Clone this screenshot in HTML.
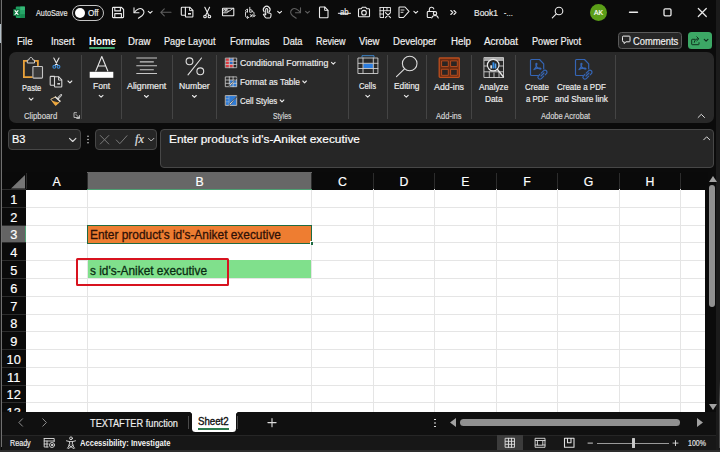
<!DOCTYPE html>
<html><head><meta charset="utf-8">
<style>
*{margin:0;padding:0;box-sizing:border-box}
html,body{width:720px;height:452px;overflow:hidden;background:#0b0b0b}
body{position:relative;font-family:"Liberation Sans",sans-serif;color:#fff;font-size:10px}
.a{position:absolute}
.t{position:absolute;white-space:pre;line-height:1;transform-origin:0 50%;-webkit-text-stroke:0.18px currentColor}
.sep{position:absolute;width:1px;background:#444;top:55px;height:64px}
svg{position:absolute;overflow:visible}
</style></head><body>

<!-- window edges -->
<div class="a" style="left:0;top:0;width:1px;height:452px;background:#1a1a1a"></div>
<div class="a" style="left:1px;top:0;width:1px;height:447px;background:#707070"></div>
<div class="a" style="left:0;top:24px;width:1.400px;height:19px;background:#b4c0c8"></div>
<div class="a" style="left:716px;top:0;width:4px;height:452px;background:#1b1b1b"></div>
<div class="a" style="left:718.500px;top:380px;width:1px;height:68px;background:linear-gradient(#1b1b1b,#4c4c4c 30%)"></div>
<div class="a" style="left:0;top:450px;width:720px;height:2px;background:#2d2d2d"></div>

<!-- title bar controls -->
<div class="a" style="left:72px;top:5px;width:32px;height:15.5px;border:1px solid #c4c4c4;border-radius:8px"></div>
<div class="a" style="left:75px;top:7.6px;width:10.4px;height:10.4px;border-radius:50%;background:#fff"></div>
<div class="a" style="left:589.5px;top:4px;width:17px;height:17px;border-radius:50%;background:#5b9e18"></div>

<!-- menu underline + buttons -->
<div class="a" style="left:89px;top:47.2px;width:26px;height:2px;background:#46a871;border-radius:1px"></div>
<div class="a" style="left:618px;top:32px;width:64px;height:17px;border:1px solid #5a5a5a;border-radius:3.5px;background:#262626"></div>
<div class="a" style="left:688px;top:32px;width:23.5px;height:17px;border-radius:3.5px;background:#3ca865"></div>

<!-- ribbon -->
<div class="a" style="left:9px;top:52px;width:705px;height:71px;background:#292929;border-radius:7px"></div>
<div class="sep" style="left:81.3px"></div>
<div class="sep" style="left:120.8px"></div>
<div class="sep" style="left:172.3px"></div>
<div class="sep" style="left:216.3px"></div>
<div class="sep" style="left:348px"></div>
<div class="sep" style="left:387.3px"></div>
<div class="sep" style="left:426.2px"></div>
<div class="sep" style="left:471px"></div>
<div class="sep" style="left:515px"></div>
<div class="sep" style="left:615px"></div>

<!-- formula bar -->
<div class="a" style="left:8px;top:129.3px;width:72.8px;height:20.4px;background:#262626;border:1px solid #474747;border-radius:4px"></div>
<div class="a" style="left:95px;top:129.3px;width:62px;height:20.4px;background:#262626;border:1px solid #474747;border-radius:4px"></div>
<div class="a" style="left:159.7px;top:129.3px;width:554.5px;height:38.4px;background:#262626;border:1px solid #474747;border-radius:4px"></div>

<!-- grid -->
<div class="a" style="left:2px;top:171.7px;width:706px;height:240.3px;background:#0a0a0a"></div>
<div class="a" style="left:26px;top:189.6px;width:679px;height:222px;background:#fff"></div>
<div class="a" style="left:86.9px;top:189px;width:1px;height:222.5px;background:#e5e5e5"></div>
<div class="a" style="left:311.2px;top:189px;width:1px;height:222.5px;background:#e5e5e5"></div>
<div class="a" style="left:372.7px;top:189px;width:1px;height:222.5px;background:#e5e5e5"></div>
<div class="a" style="left:434.2px;top:189px;width:1px;height:222.5px;background:#e5e5e5"></div>
<div class="a" style="left:495.7px;top:189px;width:1px;height:222.5px;background:#e5e5e5"></div>
<div class="a" style="left:557.2px;top:189px;width:1px;height:222.5px;background:#e5e5e5"></div>
<div class="a" style="left:618.7px;top:189px;width:1px;height:222.5px;background:#e5e5e5"></div>
<div class="a" style="left:680.2px;top:189px;width:1px;height:222.5px;background:#e5e5e5"></div>
<div class="a" style="left:26px;top:206.88px;width:679px;height:1px;background:#e5e5e5"></div>
<div class="a" style="left:26px;top:224.66px;width:679px;height:1px;background:#e5e5e5"></div>
<div class="a" style="left:26px;top:242.44px;width:679px;height:1px;background:#e5e5e5"></div>
<div class="a" style="left:26px;top:260.22px;width:679px;height:1px;background:#e5e5e5"></div>
<div class="a" style="left:26px;top:278.0px;width:679px;height:1px;background:#e5e5e5"></div>
<div class="a" style="left:26px;top:295.78px;width:679px;height:1px;background:#e5e5e5"></div>
<div class="a" style="left:26px;top:313.56px;width:679px;height:1px;background:#e5e5e5"></div>
<div class="a" style="left:26px;top:331.34000000000003px;width:679px;height:1px;background:#e5e5e5"></div>
<div class="a" style="left:26px;top:349.12px;width:679px;height:1px;background:#e5e5e5"></div>
<div class="a" style="left:26px;top:366.9px;width:679px;height:1px;background:#e5e5e5"></div>
<div class="a" style="left:26px;top:384.68px;width:679px;height:1px;background:#e5e5e5"></div>
<div class="a" style="left:26px;top:402.46000000000004px;width:679px;height:1px;background:#e5e5e5"></div>
<!-- selected header highlights -->
<div class="a" style="left:87.2px;top:171.8px;width:224.5px;height:17.8px;background:#676767;border-bottom:1.5px solid #4d9f72"></div>
<div class="a" style="left:2px;top:225.2px;width:24px;height:17.8px;background:#646464;border-right:1px solid #4d9f72"></div>
<div class="a" style="left:25.5px;top:173px;width:1px;height:16px;background:#2c2c2c"></div>
<div class="a" style="left:86.9px;top:173px;width:1px;height:16px;background:#2c2c2c"></div>
<div class="a" style="left:311.2px;top:173px;width:1px;height:16px;background:#2c2c2c"></div>
<div class="a" style="left:372.7px;top:173px;width:1px;height:16px;background:#2c2c2c"></div>
<div class="a" style="left:434.2px;top:173px;width:1px;height:16px;background:#2c2c2c"></div>
<div class="a" style="left:495.7px;top:173px;width:1px;height:16px;background:#2c2c2c"></div>
<div class="a" style="left:557.2px;top:173px;width:1px;height:16px;background:#2c2c2c"></div>
<div class="a" style="left:618.7px;top:173px;width:1px;height:16px;background:#2c2c2c"></div>
<div class="a" style="left:680.2px;top:173px;width:1px;height:16px;background:#2c2c2c"></div>
<div class="a" style="left:2px;top:189.1px;width:24px;height:1px;background:#2c2c2c"></div>
<div class="a" style="left:2px;top:206.88px;width:24px;height:1px;background:#2c2c2c"></div>
<div class="a" style="left:2px;top:224.66px;width:24px;height:1px;background:#2c2c2c"></div>
<div class="a" style="left:2px;top:242.44px;width:24px;height:1px;background:#2c2c2c"></div>
<div class="a" style="left:2px;top:260.22px;width:24px;height:1px;background:#2c2c2c"></div>
<div class="a" style="left:2px;top:278.0px;width:24px;height:1px;background:#2c2c2c"></div>
<div class="a" style="left:2px;top:295.78px;width:24px;height:1px;background:#2c2c2c"></div>
<div class="a" style="left:2px;top:313.56px;width:24px;height:1px;background:#2c2c2c"></div>
<div class="a" style="left:2px;top:331.34000000000003px;width:24px;height:1px;background:#2c2c2c"></div>
<div class="a" style="left:2px;top:349.12px;width:24px;height:1px;background:#2c2c2c"></div>
<div class="a" style="left:2px;top:366.9px;width:24px;height:1px;background:#2c2c2c"></div>
<div class="a" style="left:2px;top:384.68px;width:24px;height:1px;background:#2c2c2c"></div>
<div class="a" style="left:2px;top:402.46000000000004px;width:24px;height:1px;background:#2c2c2c"></div>
<div class="t" style="left:52.60px;top:175.60px;font-size:12.3px;color:#ffffff">A</div>
<div class="t" style="left:195.45px;top:175.60px;font-size:12.3px;color:#ffffff">B</div>
<div class="t" style="left:338.00px;top:175.60px;font-size:12.3px;color:#ffffff">C</div>
<div class="t" style="left:399.50px;top:175.60px;font-size:12.3px;color:#ffffff">D</div>
<div class="t" style="left:461.35px;top:175.60px;font-size:12.3px;color:#ffffff">E</div>
<div class="t" style="left:523.19px;top:175.60px;font-size:12.3px;color:#ffffff">F</div>
<div class="t" style="left:583.66px;top:175.60px;font-size:12.3px;color:#ffffff">G</div>
<div class="t" style="left:645.50px;top:175.60px;font-size:12.3px;color:#ffffff">H</div>
<div class="t" style="left:10.14px;top:193.84px;font-size:12.8px;color:#ffffff">1</div>
<div class="t" style="left:10.14px;top:211.62px;font-size:12.8px;color:#ffffff">2</div>
<div class="t" style="left:10.14px;top:229.40px;font-size:12.8px;color:#ffffff">3</div>
<div class="t" style="left:10.14px;top:247.18px;font-size:12.8px;color:#ffffff">4</div>
<div class="t" style="left:10.14px;top:264.96px;font-size:12.8px;color:#ffffff">5</div>
<div class="t" style="left:10.14px;top:282.74px;font-size:12.8px;color:#ffffff">6</div>
<div class="t" style="left:10.14px;top:300.52px;font-size:12.8px;color:#ffffff">7</div>
<div class="t" style="left:10.14px;top:318.30px;font-size:12.8px;color:#ffffff">8</div>
<div class="t" style="left:10.14px;top:336.08px;font-size:12.8px;color:#ffffff">9</div>
<div class="t" style="left:6.58px;top:353.86px;font-size:12.8px;color:#ffffff">10</div>
<div class="t" style="left:7.05px;top:371.64px;font-size:12.8px;color:#ffffff">11</div>
<div class="t" style="left:6.58px;top:389.42px;font-size:12.8px;color:#ffffff">12</div>
<div class="t" style="left:6.58px;top:407.20px;font-size:12.8px;color:#ffffff">13</div>
<!-- select all triangle -->
<svg style="left:11px;top:174.5px" width="14" height="13.5" viewBox="0 0 14 13.5"><path d="M14 0V13.5H0Z" fill="#767676"/></svg>

<!-- cells -->
<div class="a" style="left:87.2px;top:225.3px;width:224.8px;height:18.4px;background:#ee7d31;border:1px solid #1f6b42"></div>
<div class="a" style="left:309.5px;top:241.2px;width:3.6px;height:3.6px;background:#1f6b42;border-top:0.8px solid #fff;border-left:0.8px solid #fff"></div>
<div class="a" style="left:87.7px;top:260.2px;width:223.7px;height:18.2px;background:#80e08c"></div>
<div class="a" style="left:76.2px;top:258px;width:153.3px;height:27.8px;border:2px solid #d8131f;border-radius:1.5px"></div>

<!-- sheet tabs -->
<div class="a" style="left:2px;top:411.5px;width:714px;height:23px;background:#101010"></div>
<div class="a" style="left:191.700px;top:411.500px;width:44.100px;height:20.600px;background:#fff;border-radius:0 0 3.500px 3.500px"></div>
<div class="a" style="left:188.700px;top:411.500px;width:3px;height:3px;background:radial-gradient(circle at 0 100%,#101010 2.800px,#fff 3.200px)"></div>
<div class="a" style="left:235.800px;top:411.500px;width:3px;height:3px;background:radial-gradient(circle at 100% 100%,#101010 2.800px,#fff 3.200px)"></div>
<div class="a" style="left:197.500px;top:428px;width:31.700px;height:1.700px;background:#2a7a4c"></div>
<div class="a" style="left:188.200px;top:416px;width:1px;height:13px;background:#4a4a4a"></div>
<div class="a" style="left:237.200px;top:416px;width:1px;height:13px;background:#4a4a4a"></div>

<!-- scrollbars -->
<div class="a" style="left:709.3px;top:185px;width:6px;height:122px;border-radius:3px;background:#909090"></div>
<svg style="left:708.5px;top:176px" width="8" height="6" viewBox="0 0 8 6"><path d="M4 0L8 6H0Z" fill="#a2a2a2"/></svg>
<svg style="left:708.5px;top:403.5px" width="8" height="6" viewBox="0 0 8 6"><path d="M0 0H8L4 6Z" fill="#a2a2a2"/></svg>
<div class="a" style="left:459.5px;top:418.7px;width:220px;height:7.3px;border-radius:3.7px;background:#909090"></div>
<svg style="left:450px;top:418px" width="6" height="9" viewBox="0 0 6 9"><path d="M6 0V9L0 4.5Z" fill="#a2a2a2"/></svg>
<svg style="left:697px;top:418px" width="6" height="9" viewBox="0 0 6 9"><path d="M0 0V9L6 4.5Z" fill="#a2a2a2"/></svg>
<div class="a" style="left:434.3px;top:418.5px;width:1.6px;height:1.6px;background:#ddd;box-shadow:0 3.5px 0 #ddd,0 7px 0 #ddd"></div>

<!-- status bar -->
<div class="a" style="left:2px;top:434.5px;width:714px;height:15.5px;background:#171717;border-top:1px solid #262626"></div>
<div class="a" style="left:497px;top:434.5px;width:26px;height:15.5px;background:#3b3b3b"></div>
<div class="a" style="left:597px;top:442.6px;width:72px;height:1px;background:#9a9a9a"></div>
<div class="a" style="left:631.7px;top:438px;width:3px;height:9.5px;background:#c8c8c8;border-radius:0.5px"></div>

<svg style="left:0;top:0" width="720" height="452" viewBox="0 0 720 452" fill="none" stroke-linecap="round" stroke-linejoin="round">
<!-- ===== TITLE BAR ===== -->
<!-- excel logo -->
<g stroke="none">
<rect x="15.800" y="6.600" width="9.100" height="11.400" rx="0.900" fill="#1f9d60"/>
<rect x="20.300" y="6.600" width="4.600" height="3.900" fill="#35b877"/>
<rect x="20.300" y="10.500" width="4.600" height="3.700" fill="#27a568"/>
<rect x="20.300" y="14.200" width="4.600" height="3.800" fill="#178a50"/>
<rect x="13.200" y="9.100" width="6.600" height="7" rx="0.700" fill="#117a43"/>
<path d="M15 10.700L18 14.500M18 10.700L15 14.500" stroke="#fff" stroke-width="1.100"/>
</g>
<g stroke="#ececec" stroke-width="1.1">
<!-- save -->
<path d="M112.5 8.2a.8.8 0 0 1 .8-.8h8.2l2.1 2.1v7.3a.8.8 0 0 1-.8.8h-9.5a.8.8 0 0 1-.8-.8z"/>
<path d="M114.8 7.6v3.3h5.6V7.6M114.8 17.4v-3.8h6.6v3.8"/>
<!-- undo -->
<path d="M134 7.8v5h5"/>
<path d="M134.3 12.5c2.2-3.6 6-5 8.300-3 2.300 2 1.400 4.600-.6 6.200l-3.600 2.500"/>
<path d="M148.300 11.300l1.900 1.900 1.900-1.900"/>
<!-- copy/paste -->
<path d="M185.500 15.300h-3.500a.7.7 0 0 1-.7-.7v-6.600a.7.7 0 0 1 .7-.7h3.300"/>
<path d="M185.400 7.200h4.300l3.200 3.200v5.900a.7.7 0 0 1-.7.700h-6.100a.7.700 0 0 1-.7-.7z"/>
<path d="M189.500 7.400v3.200h3.200" stroke-width="0.9"/>
<rect x="188" y="13" width="3" height="1.600" fill="#ececec" stroke="none"/>
<!-- scissors -->
<path d="M204.800 7.200l4 8.200M209.600 7.200l-4 8.200"/>
<circle cx="205" cy="16.500" r="1.300"/><circle cx="209.400" cy="16.500" r="1.300"/>
<!-- mail/pen -->
<rect x="222.500" y="8.300" width="11.300" height="7.400" rx="0.500"/>
<path d="M227.500 12.300l5.500-3.800M222.800 12.800h4" stroke-width="0.900"/>
<path d="M224.300 9.300a1 1 0 1 0 0 2 1 1 0 1 0 0-2M225.500 9.200v2.200M226.600 8.600v2.800a1 1 0 1 0 0-1.800" stroke-width="0.700"/>
<!-- replace (ab + arrows) -->
<path d="M247.300 9.500a1.300 1.300 0 1 0 0 2.400M247.500 9.200v2.900M249.800 7.300v4.800M249.800 10a1.400 1.400 0 1 1 0 2" stroke-width="0.900"/>
<path d="M245.500 12.500v3.300c0 1 .6 1.600 1.600 1.600h1.200M247.300 16.200l1.200 1.200-1.200 1.200M254 16.500v-3.300c0-1-.6-1.600-1.600-1.600M255.300 15.300l-1.300 1.300-1.300-1.300M250.300 14.500l2 2.500M252.300 14.500l-2 2.500" stroke-width="0.900"/>
<!-- touch -->
<path d="M264.200 11.800a3.300 3.300 0 1 1 5 0"/>
<path d="M265.700 14.500v-5a1 1 0 0 1 2 0v3.200l2.300.5c.8.200 1.200.7 1.100 1.500l-.4 2.300c-.1.600-.5 1-1.200 1h-3c-.6 0-1-.3-1.300-.8l-1.800-2.800c.6-.6 1.500-.5 2.300.4z"/>
<path d="M277.700 11.300l1.900 1.900 1.900-1.900"/>
<!-- new doc -->
<path d="M319.500 7.700a.7.7 0 0 1 .7-.7h4.500l3.300 3.300v6.700a.7.700 0 0 1-.7.700h-7.100a.7.700 0 0 1-.7-.7z"/>
<path d="M324.600 7.200v3.200h3.200" stroke-width="0.9"/>
<!-- strikethrough ab -->
<path d="M338.300 13.300h12.200" stroke-width="1"/>
<!-- camera -->
<path d="M358.500 9.500a.8.800 0 0 1 .8-.8h2l1-1.500h3.400l1 1.500h2a.8.800 0 0 1 .8.800v6.500a.8.800 0 0 1-.8.800h-9.400a.8.800 0 0 1-.8-.8z"/>
<circle cx="364" cy="12.700" r="2.300"/>
<!-- table x -->
<path d="M380 7.500h10.500v4M380 7.500v10h3.500M380 10.700h10.500M383.500 7.500v10M387 7.500v3.200M380 14h3.500" stroke-width="0.9"/>
<path d="M385.500 12.700l5 5M390.500 12.700l-5 5"/>
<!-- doc pen -->
<path d="M403 17.500h-3.300a.7.700 0 0 1-.7-.7v-9.100a.7.700 0 0 1 .7-.7h5.300l4 4.300-5.500 6.200z"/>
<path d="M401 10h3M401 12.300h2" stroke-width="0.9"/>
<path d="M413.900 11.300l1.900 1.900 1.900-1.900"/>
<!-- lock person -->
<path d="M431 17.500h-3a.7.700 0 0 1-.7-.7v-4.600a.7.700 0 0 1 .7-.7h6.500"/>
<path d="M429.300 11.300v-1.800a2.300 2.300 0 0 1 4.500-.6"/>
<circle cx="435" cy="13.300" r="1.700"/>
<path d="M431.800 18c.3-1.700 1.500-2.500 3.200-2.500s2.900.8 3.200 2.500"/>
<!-- >> -->
<path d="M450.800 10.500l2 2-2 2M454 10.500l2 2-2 2"/>
<!-- search -->
<circle cx="559" cy="11" r="3.800"/><path d="M556.300 13.800l-4 4"/>
<!-- window controls -->
<path d="M629.500 12.300h8" stroke-width="1.400"/>
<rect x="664" y="8.800" width="7" height="7" rx="1.200" stroke-width="1.300"/>
<path d="M698.300 8.500l8 8M706.300 8.500l-8 8" stroke-width="1.200"/>
</g>
<!-- dim icons -->
<g stroke="#5f5f5f" stroke-width="1.100">
<path d="M171 12.300h-10.200M164.300 8.800l-3.500 3.500 3.500 3.500"/>
<path d="M300.500 7.800v5h-5"/>
<path d="M300.300 12.500c-2.200-3.600-6-5-8.300-3-2.300 2-1.400 4.600.6 6.200l3.600 2.500"/>
<path d="M305.600 11.300l1.900 1.900 1.900-1.900"/>
</g>

<!-- ===== MENU BUTTON ICONS ===== -->
<g stroke="#f0f0f0" stroke-width="1">
<path d="M622.500 36.800a.7.700 0 0 1 .7-.700h6.100a.7.700 0 0 1 .7.700v4.300a.7.700 0 0 1-.7.700h-3.300l-1.900 1.700v-1.700h-.9a.7.700 0 0 1-.7-.7z"/>
</g>
<g stroke="#10331f" stroke-width="1">
<path d="M695 39.300h-2.800a.5.500 0 0 0-.5.500v4.400a.5.500 0 0 0 .5.500h6.300a.5.500 0 0 0 .5-.5v-1.500"/>
<path d="M694.300 42.300c.3-2.300 1.700-3.500 4-3.500M696.800 36.800l2 2-2 2"/>
<path d="M704.300 39.300l1.800 1.800 1.800-1.800" stroke-width="1.200"/>
</g>

<!-- ===== RIBBON ICONS ===== -->
<!-- paste -->
<path d="M27.500 60.800h-3.600v16.400h8" stroke="#e9a23b" stroke-width="1.800" stroke-linejoin="miter"/>
<path d="M34.300 60.800h3.600v4.500" stroke="#e9a23b" stroke-width="1.800" stroke-linejoin="miter"/>
<path d="M27.300 62.600v-2.400l1.700-.4c0-1.400.8-2.300 1.900-2.300s1.900.9 1.900 2.300l1.700.4v2.400z" stroke="#d0d0d0" stroke-width="1" fill="#292929"/>
<rect x="32.900" y="66.500" width="9.600" height="11.600" rx="0.800" stroke="#c4c4c4" stroke-width="1.100" fill="#3a3a3a"/>
<path d="M29.200 98.200l1.900 1.900 1.900-1.900" stroke="#e8e8e8" stroke-width="1.100"/>
<!-- scissors -->
<path d="M53.800 58l3.900 7.500M59 58l-3.900 7.500" stroke="#e8e8e8" stroke-width="1.100"/>
<circle cx="54.300" cy="66.800" r="1.400" stroke="#3f8fdb" stroke-width="1.100"/><circle cx="58.500" cy="66.800" r="1.400" stroke="#3f8fdb" stroke-width="1.100"/>
<!-- copy -->
<g stroke="#d6d6d6" stroke-width="1.100">
<path d="M54.300 85.300h-3.400a.7.700 0 0 1-.7-.7v-7.500a.7.700 0 0 1 .7-.7h3.600"/>
<path d="M54.500 76.800h4.300l3 3.100v6.400a.7.700 0 0 1-.7.700h-5.900a.7.700 0 0 1-.7-.7z"/>
<path d="M58.500 77v3.100h3.100" stroke-width="0.900"/>
<rect x="57.300" y="83" width="2.700" height="1.600" fill="#d6d6d6" stroke="none"/>
<path d="M68 81l1.900 1.900 1.900-1.900" stroke="#e8e8e8"/>
</g>
<!-- format painter -->
<path d="M58.400 98l2.700-2.900" stroke="#d4d4d4" stroke-width="2.100"/>
<path d="M58.700 97.700l2.200-2.400" stroke="#3a3a3a" stroke-width="0.600"/>
<path d="M55.400 97l4.600 4.300" stroke="#ededed" stroke-width="1.300"/>
<path d="M55.400 97l-4.600 2.200 5 6 4.200-3.900" stroke="#f0cf9a" stroke-width="0.900"/>
<path d="M52.600 101.400l5.800 1.500-2.600 2.300z" fill="#f2a93a" stroke="#f2a93a" stroke-width="0.800"/>
<!-- dialog launcher -->
<path d="M79.500 117.500h-5.500v-4.800h2.500M79.500 115.500v3h-2.800M76 114.500l3 3" stroke="#c4c4c4" stroke-width="0.900"/>
<!-- font A -->
<path d="M95.800 71l6-14.500 6 14.500M98 66h7.600" stroke="#e6e6e6" stroke-width="1.100"/>
<rect x="89.700" y="71.800" width="23.600" height="6" fill="#ffffff"/>
<path d="M99.200 95.300l1.900 1.900 1.900-1.900" stroke="#e8e8e8" stroke-width="1.100"/>
<!-- alignment -->
<path d="M136.300 58h20.700M139.800 61.900h14M136.300 65.800h20.700M139.800 69.700h14M136.300 73.500h20.700" stroke="#c6c6c6" stroke-width="1.100" stroke-linecap="butt"/>
<path d="M144.500 95.500l1.900 1.900 1.900-1.900" stroke="#e8e8e8" stroke-width="1.100"/>
<!-- percent -->
<circle cx="189.500" cy="61.300" r="3.400" stroke="#e0e0e0" stroke-width="1.100"/>
<circle cx="200.300" cy="71.300" r="3.400" stroke="#e0e0e0" stroke-width="1.100"/>
<path d="M201.500 58l-13.500 16.800" stroke="#e0e0e0" stroke-width="1.100"/>
<path d="M192.500 95.500l1.900 1.900 1.900-1.900" stroke="#e8e8e8" stroke-width="1.100"/>
<!-- conditional formatting -->
<rect x="226" y="58.300" width="7.300" height="9" fill="#dc3a40"/>
<rect x="229.500" y="58.300" width="3.500" height="2.800" fill="#3f86d6"/>
<rect x="229.500" y="61.500" width="3.500" height="2.800" fill="#2b6fc4"/>
<path d="M225.700 58.100h11v9.600h-11zM225.700 61.300h11M225.700 64.500h11M229.300 58.100v9.600M233.100 58.100v9.600" stroke="#c9c9c9" stroke-width="0.800"/>
<path d="M331.500 62.300l1.800 1.800 1.800-1.800" stroke="#e8e8e8" stroke-width="1.100"/>
<!-- format as table -->
<rect x="229.500" y="80.200" width="7.200" height="6.500" fill="#2e7bd6"/>
<path d="M225.700 76.900h11v9.800h-11zM225.700 80h11M225.700 83.300h11M229.300 76.900v9.800M233.100 76.900v9.800" stroke="#d2d2d2" stroke-width="0.800"/>
<path d="M236.800 78l-6 7.500-1.800 1.500.6-2.300z" fill="#e8e8e8" stroke="#292929" stroke-width="0.500"/>
<path d="M302.800 81l1.800 1.800 1.800-1.800" stroke="#e8e8e8" stroke-width="1.100"/>
<!-- cell styles -->
<rect x="226" y="96" width="10.400" height="9.300" fill="#2e7bd6"/>
<path d="M225.700 95.600h11v9.800h-11z" stroke="#c4c4c4" stroke-width="0.900"/>
<path d="M225.700 98.600h3M225.700 101.800h3M229 95.600v9.800" stroke="#9fb6cf" stroke-width="0.600"/>
<path d="M236.800 96.800l-6 7.500-1.800 1.500.6-2.300z" fill="#e8e8e8" stroke="#292929" stroke-width="0.500"/>
<path d="M280.200 100l1.800 1.800 1.800-1.800" stroke="#e8e8e8" stroke-width="1.100"/>
<!-- cells -->
<path d="M362 57v-1.300h12V57" stroke="#3f8fdb" stroke-width="0.900"/>
<rect x="363.200" y="63.600" width="10" height="4.800" fill="#2b7de0"/>
<path d="M358.300 58h19.600v15.500h-19.600zM358.300 63.300h19.600M358.300 68.500h19.600M363 58v15.500M373.300 58v15.500" stroke="#d0d0d0" stroke-width="0.900"/>
<path d="M365.800 95.300l1.900 1.900 1.900-1.900" stroke="#e8e8e8" stroke-width="1.100"/>
<!-- editing magnifier -->
<circle cx="409.700" cy="63.500" r="7.300" stroke="#dcdcdc" stroke-width="1.100"/>
<path d="M404.500 68.800l-8 7.800" stroke="#dcdcdc" stroke-width="1.100"/>
<path d="M404.400 95.300l1.900 1.900 1.900-1.900" stroke="#e8e8e8" stroke-width="1.100"/>
<!-- add-ins -->
<g stroke="#bb4e1e">
<rect x="439.200" y="58" width="20.100" height="19.300" rx="0.800" stroke-width="1.300" fill="#6a2b12"/>
<rect x="442" y="60.900" width="6.300" height="5.600" stroke-width="0.900" fill="#2b2523"/>
<rect x="451" y="60.900" width="6.300" height="5.600" stroke-width="0.900" fill="#2b2523"/>
<rect x="442" y="69.300" width="6.300" height="6" stroke-width="0.900" fill="#2b2523"/>
<rect x="451" y="69.300" width="6.300" height="6" stroke-width="0.900" fill="#2b2523"/>
</g>
<!-- analyze data -->
<rect x="484.300" y="57.600" width="19.200" height="2.600" fill="#a8a8a8"/>
<path d="M484.300 57.600h19.200v19.900h-19.200zM484.300 60.300h19.200M484.300 66h4M499 66h4.500M484.300 71.800h19.200M489.300 71.800v5.700M494 73v4.500M499 71.800v5.700" stroke="#cfcfcf" stroke-width="0.900"/>
<circle cx="493.200" cy="65.100" r="5.800" fill="#262626" stroke="#e8e8e8" stroke-width="1.200"/>
<path d="M497.500 69.500l6 7.500" stroke="#e8e8e8" stroke-width="1.300"/>
<rect x="490.300" y="65.300" width="1.800" height="3.200" fill="#dcdcdc"/><rect x="492.500" y="62.300" width="1.800" height="6.200" fill="#2f8be6"/><rect x="494.700" y="63.500" width="1.600" height="5" fill="#5aa6ee"/>
<!-- pdf icons -->
<g stroke="#3565b4" stroke-width="1.200">
<path id="pdfdoc" d="M538 75.500h-6.500a1 1 0 0 1-1-1v-14a1 1 0 0 1 1-1h8l4.200 4.300v5"/>
<path d="M534 69.500c1.500-1.300 2.600-3.300 2.900-5.300.2-1.200-.9-1.300-1-.2-.2 2 1.700 4.200 4 5 1.200.4 1.500-.8.300-.9-2.200-.2-4.500.5-6.200 1.400"/>
<path d="M541.200 73.200l2.300-2.400a2 2 0 0 1 2.900 2.800l-1.300 1.300M543.700 76.200l-2.300 2.400a2 2 0 0 1-2.900-2.800l1.300-1.300M541 76l3-3"/>
<g transform="translate(45 0)">
<path d="M538 75.500h-6.500a1 1 0 0 1-1-1v-14a1 1 0 0 1 1-1h8l4.200 4.300v5"/>
<path d="M534 69.500c1.500-1.300 2.600-3.300 2.900-5.300.2-1.200-.9-1.300-1-.2-.2 2 1.700 4.200 4 5 1.200.4 1.500-.8.300-.9-2.200-.2-4.500.5-6.200 1.400"/>
<path d="M541.200 73.200l2.300-2.400a2 2 0 0 1 2.900 2.800l-1.300 1.300M543.700 76.200l-2.300 2.400a2 2 0 0 1-2.900-2.800l1.300-1.300M541 76l3-3"/>
</g>
</g>
<!-- collapse ribbon chevron -->
<path d="M698.100 117.500l3.200-3.200 3.200 3.200" stroke="#dcdcdc" stroke-width="1"/>

<!-- ===== FORMULA BAR ICONS ===== -->
<path d="M69.500 138.300l3.200 3.200 3.200-3.200" stroke="#dcdcdc" stroke-width="1.100"/>
<circle cx="88" cy="136.300" r="0.800" fill="#cfcfcf"/><circle cx="88" cy="139.500" r="0.800" fill="#cfcfcf"/><circle cx="88" cy="142.700" r="0.800" fill="#cfcfcf"/>
<path d="M100.300 135.500l8.500 8.500M108.800 135.500l-8.500 8.500" stroke="#7a7a7a" stroke-width="1"/>
<path d="M116.300 140l3.500 3.700 7.200-8" stroke="#7a7a7a" stroke-width="1"/>
<path d="M148.500 138.300l2.700 2.700 2.700-2.700" stroke="#bdbdbd" stroke-width="1"/>
<path d="M703.700 139.800l3-3 3 3" stroke="#dcdcdc" stroke-width="1"/>

<!-- ===== TAB BAR ICONS ===== -->
<path d="M22.500 418.800l-3.600 3.700 3.600 3.700M42.800 418.800l3.600 3.700-3.600 3.700" stroke="#8f8f8f" stroke-width="1"/>
<path d="M272 418.500v8.200M267.900 422.600h8.200" stroke="#dcdcdc" stroke-width="1.100"/>

<!-- ===== STATUS BAR ICONS ===== -->
<g stroke="#e0e0e0" stroke-width="0.900">
<path d="M44.200 438.500h10v3M44.200 438.500v8.500h4M44.200 441h10M47 441v6M44.200 444h4"/>
<circle cx="52" cy="445" r="2.500"/><circle cx="52" cy="445" r="0.700" fill="#e0e0e0"/>
<circle cx="71" cy="438.300" r="1.400"/>
<path d="M66.500 440.800l3 .8h3l3-.8M69.500 441.600l.2 3-2.200 3.600M72.500 441.600l-.2 3 2.200 3.600M68.500 445l5 3.500M73.500 445l-5 3.500"/>
<!-- view buttons -->
<path d="M505.500 438.300h9v9h-9zM505.500 441.300h9M505.500 444.300h9M508.500 438.300v9M511.500 438.300v9"/>
<path d="M535.500 438.300h9.500v9h-9.500zM537.800 440.500h5v4.700h-5zM535.500 440.500h2M543 440.500h2M535.500 445h2M543 445h2"/>
<path d="M564.500 438.300h9.500v9h-9.500zM567.500 438.300v4.500h3.500v-4.500" stroke-width="1.100"/>
<path d="M588 443.100h4.500M673 443.100h5M675.500 440.600v5"/>
</g>
</svg>

<div class="t" style="left:36.00px;top:8.71px;font-size:8.8px;color:#e4e4e4;transform:scaleX(0.8256)">AutoSave</div>
<div class="t" style="left:88.00px;top:8.71px;font-size:8.8px;color:#f0f0f0;transform:scaleX(0.9069)">Off</div>
<div class="t" style="left:474.00px;top:8.12px;font-size:9.8px;color:#e8e8e8;transform:scaleX(0.8639)">Book1</div>
<div class="t" style="left:503.70px;top:8.12px;font-size:9.8px;color:#e8e8e8;transform:scaleX(0.6967)">-…</div>
<div class="t" style="left:593.50px;top:9.18px;font-size:7px;color:#ffffff;transform:scaleX(0.9632)">AK</div>
<div class="t" style="left:340.00px;top:6.92px;font-size:9.6px;color:#ececec;transform:scaleX(0.8059)">ab</div>
<div class="t" style="left:17.00px;top:37.02px;font-size:10px;color:#f1f1f1;transform:scaleX(0.9612)">File</div>
<div class="t" style="left:51.00px;top:37.02px;font-size:10px;color:#f1f1f1;transform:scaleX(0.9394)">Insert</div>
<div class="t" style="left:128.00px;top:37.02px;font-size:10px;color:#f1f1f1;transform:scaleX(0.9639)">Draw</div>
<div class="t" style="left:164.00px;top:37.02px;font-size:10px;color:#f1f1f1;transform:scaleX(0.9168)">Page Layout</div>
<div class="t" style="left:230.00px;top:37.02px;font-size:10px;color:#f1f1f1;transform:scaleX(0.9475)">Formulas</div>
<div class="t" style="left:283.00px;top:37.02px;font-size:10px;color:#f1f1f1;transform:scaleX(0.9231)">Data</div>
<div class="t" style="left:316.00px;top:37.02px;font-size:10px;color:#f1f1f1;transform:scaleX(0.8995)">Review</div>
<div class="t" style="left:359.00px;top:37.02px;font-size:10px;color:#f1f1f1;transform:scaleX(0.9535)">View</div>
<div class="t" style="left:393.00px;top:37.02px;font-size:10px;color:#f1f1f1;transform:scaleX(0.9541)">Developer</div>
<div class="t" style="left:451.00px;top:37.02px;font-size:10px;color:#f1f1f1;transform:scaleX(0.9719)">Help</div>
<div class="t" style="left:484.00px;top:37.02px;font-size:10px;color:#f1f1f1;transform:scaleX(0.9864)">Acrobat</div>
<div class="t" style="left:532.00px;top:37.02px;font-size:10px;color:#f1f1f1;transform:scaleX(0.9183)">Power Pivot</div>
<div class="t" style="left:88.50px;top:37.02px;font-size:10px;color:#ffffff;transform:scaleX(0.9713);font-weight:700;-webkit-text-stroke:0">Home</div>
<div class="t" style="left:633.00px;top:37.02px;font-size:10px;color:#f1f1f1;transform:scaleX(0.9367)">Comments</div>
<div class="t" style="left:21.70px;top:82.71px;font-size:9.4px;color:#eeeeee;transform:scaleX(0.8047)">Paste</div>
<div class="t" style="left:93.00px;top:80.91px;font-size:9.4px;color:#eeeeee;transform:scaleX(0.9059)">Font</div>
<div class="t" style="left:127.00px;top:81.11px;font-size:9.4px;color:#eeeeee;transform:scaleX(0.9424)">Alignment</div>
<div class="t" style="left:179.30px;top:81.11px;font-size:9.4px;color:#eeeeee;transform:scaleX(0.9207)">Number</div>
<div class="t" style="left:239.70px;top:58.41px;font-size:9.4px;color:#eeeeee;transform:scaleX(0.9361)">Conditional Formatting</div>
<div class="t" style="left:239.70px;top:77.11px;font-size:9.4px;color:#eeeeee;transform:scaleX(0.8949)">Format as Table</div>
<div class="t" style="left:239.70px;top:96.21px;font-size:9.4px;color:#eeeeee;transform:scaleX(0.8420)">Cell Styles</div>
<div class="t" style="left:359.30px;top:80.91px;font-size:9.4px;color:#eeeeee;transform:scaleX(0.8156)">Cells</div>
<div class="t" style="left:393.80px;top:81.11px;font-size:9.4px;color:#eeeeee;transform:scaleX(0.8894)">Editing</div>
<div class="t" style="left:434.00px;top:82.11px;font-size:9.4px;color:#eeeeee;transform:scaleX(0.9435)">Add-ins</div>
<div class="t" style="left:479.00px;top:82.31px;font-size:9.4px;color:#eeeeee;transform:scaleX(0.8783)">Analyze</div>
<div class="t" style="left:485.00px;top:94.11px;font-size:9.4px;color:#eeeeee;transform:scaleX(0.8833)">Data</div>
<div class="t" style="left:524.70px;top:82.41px;font-size:9.4px;color:#eeeeee;transform:scaleX(0.8529)">Create</div>
<div class="t" style="left:525.80px;top:94.11px;font-size:9.4px;color:#eeeeee;transform:scaleX(0.8353)">a PDF</div>
<div class="t" style="left:557.00px;top:82.41px;font-size:9.4px;color:#eeeeee;transform:scaleX(0.8515)">Create a PDF</div>
<div class="t" style="left:555.00px;top:94.11px;font-size:9.4px;color:#eeeeee;transform:scaleX(0.8843)">and Share link</div>
<div class="t" style="left:23.80px;top:112.10px;font-size:8.6px;color:#d6d6d6;transform:scaleX(0.9023)">Clipboard</div>
<div class="t" style="left:273.00px;top:112.10px;font-size:8.6px;color:#d6d6d6;transform:scaleX(0.7818)">Styles</div>
<div class="t" style="left:435.80px;top:112.10px;font-size:8.6px;color:#d6d6d6;transform:scaleX(0.8751)">Add-ins</div>
<div class="t" style="left:540.80px;top:112.10px;font-size:8.6px;color:#d6d6d6;transform:scaleX(0.8725)">Adobe Acrobat</div>
<div class="t" style="left:12.00px;top:134.39px;font-size:11.5px;color:#ffffff;transform:scaleX(0.9589)">B3</div>
<div class="t" style="left:168.50px;top:134.24px;font-size:11.8px;color:#ffffff;transform:scaleX(1.0083)">Enter product&#x27;s id&#x27;s-Aniket executive</div>
<div class="t" style="left:90.30px;top:228.26px;font-size:13px;color:#2e1006;transform:scaleX(0.9150);-webkit-text-stroke:0.3px #2e1006">Enter product&#x27;s id&#x27;s-Aniket executive</div>
<div class="t" style="left:90.30px;top:264.06px;font-size:13px;color:#0a2c12;transform:scaleX(0.9125);-webkit-text-stroke:0.3px #0a2c12">s id&#x27;s-Aniket executive</div>
<div class="t" style="left:135.00px;top:133.40px;font-size:12.5px;color:#e2e2e2;transform:scaleX(0.9759);font-family:'Liberation Serif',serif;font-style:italic">fx</div>
<div class="t" style="left:90.00px;top:418.92px;font-size:10.4px;color:#eeeeee;transform:scaleX(0.8878)">TEXTAFTER function</div>
<div class="t" style="left:198.00px;top:417.02px;font-size:10.2px;color:#111111;transform:scaleX(0.9506);-webkit-text-stroke:0.35px #111">Sheet2</div>
<div class="t" style="left:10.30px;top:438.91px;font-size:8.8px;color:#ececec;transform:scaleX(0.8138)">Ready</div>
<div class="t" style="left:79.50px;top:438.80px;font-size:8.6px;color:#f2f2f2;transform:scaleX(0.8812);font-weight:700;-webkit-text-stroke:0">Accessibility: Investigate</div>
<div class="t" style="left:687.50px;top:438.80px;font-size:8.6px;color:#e2e2e2;transform:scaleX(0.8188)">100%</div>
</body></html>
